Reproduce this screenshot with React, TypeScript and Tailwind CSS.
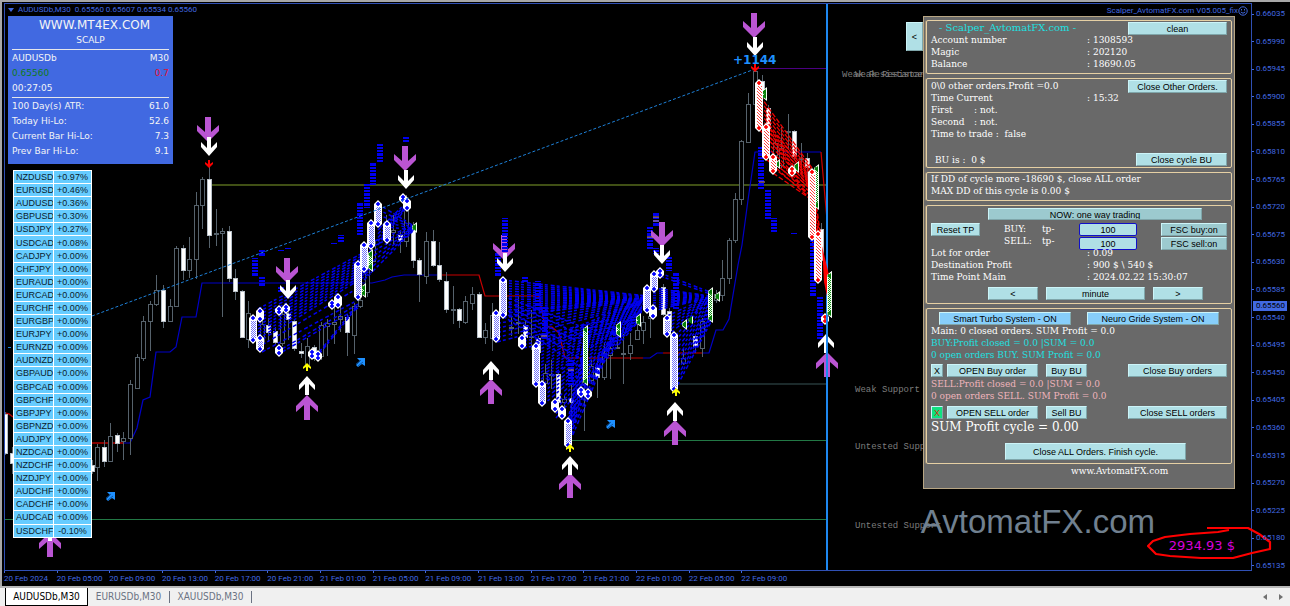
import { useState } from "react";

type Candle = [x: number, high: number, top: number, bottom: number, low: number, down?: 1];
type Span = [x: number, top: number, bottom: number];
type Fan = [x0: number, a0: number, b0: number, x1: number, a1: number, b1: number, count: number];

const candles: Candle[] = [
  [5, 412, 414, 453, 455, 1], [12, 447, 453, 463, 474, 1], [92, 460, 465, 471, 474, 1],
  [97, 444, 447, 467, 481], [104, 440, 447, 461, 467, 1], [110, 423, 436, 461, 461],
  [117, 433, 435, 443, 452, 1], [123, 432, 438, 441, 460], [130, 380, 384, 438, 455],
  [137, 354, 357, 388, 389], [143, 316, 321, 358, 361], [150, 301, 304, 321, 351],
  [156, 275, 290, 304, 306], [163, 285, 290, 321, 328, 1], [170, 299, 306, 321, 322],
  [176, 246, 248, 306, 306], [183, 245, 248, 270, 280, 1], [189, 237, 259, 270, 278],
  [196, 192, 205, 259, 279], [202, 177, 179, 205, 229], [209, 165, 179, 235, 248, 1],
  [216, 209, 233, 234, 246], [222, 228, 231, 233, 317], [229, 226, 231, 278, 282, 1],
  [235, 269, 278, 291, 300, 1], [242, 290, 291, 337, 338, 1], [248, 301, 313, 339, 348],
  [262, 312, 324, 343, 350], [268, 318, 325, 332, 342, 1], [275, 327, 331, 342, 345, 1],
  [282, 311, 314, 343, 346], [288, 306, 313, 319, 340, 1], [294, 320, 321, 348, 351, 1],
  [301, 343, 351, 353, 358, 1], [307, 338, 346, 366, 366], [314, 345, 347, 358, 361, 1],
  [321, 322, 325, 356, 360], [327, 319, 323, 326, 356], [334, 307, 322, 324, 344],
  [340, 300, 316, 319, 332], [347, 314, 317, 332, 356, 1], [354, 303, 306, 335, 354],
  [360, 296, 300, 306, 308], [367, 245, 262, 292, 297], [373, 236, 240, 261, 262],
  [386, 215, 222, 232, 245, 1], [393, 215, 230, 232, 245], [400, 230, 235, 241, 253, 1],
  [406, 195, 203, 241, 247], [413, 222, 230, 260, 268, 1], [419, 258, 260, 274, 302, 1],
  [426, 232, 241, 276, 284], [433, 230, 241, 265, 267, 1], [439, 242, 265, 279, 282, 1],
  [446, 272, 281, 309, 313, 1], [453, 286, 309, 310, 324], [459, 308, 309, 320, 328, 1],
  [465, 296, 301, 322, 324], [472, 287, 294, 303, 310], [479, 292, 294, 337, 338, 1],
  [485, 323, 330, 337, 344], [492, 303, 315, 338, 351], [511, 316, 327, 328, 336],
  [518, 296, 322, 323, 334], [525, 320, 325, 337, 345, 1], [531, 310, 336, 337, 350],
  [538, 336, 338, 352, 360, 1], [545, 364, 373, 383, 396], [551, 360, 374, 375, 389],
  [558, 372, 374, 402, 404, 1], [564, 395, 399, 402, 418], [571, 385, 398, 402, 425, 1],
  [584, 340, 360, 384, 431], [591, 360, 366, 380, 384], [597, 361, 367, 377, 398, 1],
  [604, 343, 353, 377, 380], [610, 340, 348, 355, 379], [617, 333, 347, 348, 349],
  [623, 334, 353, 354, 384], [630, 333, 345, 353, 360], [637, 320, 330, 339, 340],
  [643, 316, 322, 330, 344], [650, 298, 316, 318, 338], [663, 284, 287, 314, 316, 1],
  [669, 308, 311, 330, 333, 1], [683, 348, 358, 363, 365], [695, 334, 336, 346, 353, 1],
  [702, 318, 321, 348, 357], [716, 290, 294, 300, 303], [722, 260, 278, 295, 301],
  [729, 238, 240, 278, 284], [735, 193, 199, 240, 243], [741, 140, 141, 199, 205],
  [748, 93, 104, 142, 142], [755, 65, 71, 104, 104], [762, 75, 81, 96, 110, 1],
  [768, 105, 108, 128, 130, 1], [775, 140, 143, 155, 160], [781, 127, 148, 165, 168],
  [788, 114, 131, 132, 150], [794, 130, 131, 156, 160, 1], [801, 143, 158, 159, 175],
  [807, 153, 158, 167, 180, 1], [821, 223, 229, 260, 262, 1],
];

const bars: Span[] = [
  [255, 258, 277], [262, 250, 256], [262, 277, 286], [281, 249, 251], [288, 248, 249],
  [281, 286, 292], [341, 235, 243], [334, 243, 244], [360, 203, 235], [367, 184, 208],
  [373, 162, 185], [380, 144, 162], [406, 136, 142], [498, 253, 277], [505, 218, 252],
  [525, 277, 283], [538, 281, 310], [545, 306, 340], [571, 360, 385], [656, 213, 227],
  [650, 227, 249], [656, 248, 254], [663, 212, 213], [669, 256, 271], [676, 273, 310],
  [761, 146, 189], [768, 189, 219], [774, 218, 232], [794, 233, 234], [813, 239, 297],
  [820, 297, 340],
];

const blueStacks: Span[] = [
  [253, 316, 342], [260, 309, 321], [260, 336, 351], [279, 307, 314], [286, 305, 312],
  [279, 346, 355], [332, 301, 308], [338, 295, 307], [312, 350, 358], [318, 352, 360],
  [358, 262, 299], [364, 243, 271], [371, 221, 248], [378, 202, 226], [387, 222, 242],
  [403, 195, 202], [407, 199, 210], [503, 278, 317], [496, 311, 341], [522, 336, 348],
  [536, 344, 386], [542, 382, 405], [555, 400, 411], [562, 407, 418], [568, 419, 447],
  [581, 388, 396], [588, 390, 398], [647, 286, 312], [654, 272, 291], [653, 306, 318],
  [660, 269, 277], [667, 316, 336], [674, 333, 391],
];

const greenStacks: Span[] = [
  [414, 223, 232], [370, 250, 271], [363, 284, 297], [585, 326, 385], [618, 322, 337],
  [638, 314, 326], [653, 308, 316], [684, 320, 329], [690, 317, 323], [710, 288, 322],
  [717, 292, 301], [764, 88, 100], [777, 160, 168], [796, 162, 172], [816, 165, 209],
  [829, 272, 317],
];

const redStacks: Span[] = [
  [759, 81, 130], [766, 125, 159], [773, 155, 173], [792, 167, 175], [812, 170, 239],
  [818, 232, 282], [825, 315, 323],
];

const blueFans: Fan[] = [
  [258, 309, 342, 372, 248, 272, 11],
  [262, 345, 352, 358, 288, 300, 2],
  [282, 349, 352, 358, 304, 308, 2],
  [316, 356, 358, 358, 304, 306, 2],
  [364, 245, 280, 414, 226, 230, 7],
  [378, 204, 226, 414, 226, 230, 5],
  [378, 230, 245, 406, 203, 208, 5],
  [503, 280, 316, 647, 296, 300, 14],
  [497, 314, 342, 647, 297, 303, 7],
  [503, 296, 316, 585, 328, 370, 6],
  [523, 338, 348, 618, 318, 330, 4],
  [536, 344, 386, 642, 300, 312, 13],
  [543, 384, 405, 638, 312, 322, 6],
  [556, 400, 418, 638, 314, 322, 5],
  [568, 420, 446, 587, 330, 382, 8],
  [568, 420, 446, 616, 326, 334, 5],
  [647, 287, 312, 710, 296, 298, 10],
  [660, 273, 276, 710, 292, 294, 2],
  [667, 316, 336, 710, 296, 300, 6],
  [675, 336, 390, 712, 297, 320, 12],
];

const redFans: Fan[] = [
  [760, 96, 130, 812, 168, 190, 9],
  [766, 124, 159, 812, 176, 200, 9],
  [773, 157, 173, 812, 190, 200, 4],
  [812, 172, 239, 820, 232, 282, 8],
];

const purpleDown = [[208, 117], [287, 258], [405, 146], [504, 235], [662, 222], [754, 13]];
const whiteDown = [[209, 137], [288, 280], [406, 170], [505, 253], [662, 245], [755, 37]];
const purpleUp = [[307, 395], [491, 379], [570, 473], [675, 420], [827, 352], [50, 532]];
const whiteUp = [[307, 376], [491, 361], [570, 456], [675, 402], [826, 334], [50, 522]];

const BIG = "M-3 0H3V15L11 8V14L0 25L-11 14V8L-3 15Z";
const MID = "M-2 0H2V11L8 5V10L0 19L-8 10V5L-2 11Z";
const SMALL = "M-1 0H1V4L4 2V4L0 8L-4 4V2L-1 4Z";

const prices = [
  "0.66035", "0.65990", "0.65945", "0.65900", "0.65855", "0.65810", "0.65765", "0.65720",
  "0.65675", "0.65630", "0.65585", "0.65540", "0.65495", "0.65450", "0.65405", "0.65360",
  "0.65315", "0.65270", "0.65225", "0.65180", "0.65135",
];

const times = [
  "20 Feb 2024", "20 Feb 05:00", "20 Feb 09:00", "20 Feb 13:00", "20 Feb 17:00",
  "20 Feb 21:00", "21 Feb 01:00", "21 Feb 05:00", "21 Feb 09:00", "21 Feb 13:00",
  "21 Feb 17:00", "21 Feb 21:00", "22 Feb 01:00", "22 Feb 05:00", "22 Feb 09:00",
];

const changes: Record<string, string> = {
  NZDUSD: "+0.97%", EURUSD: "+0.46%", AUDUSD: "+0.36%", GBPUSD: "+0.30%",
  USDJPY: "+0.27%", USDCAD: "+0.08%", CADJPY: "+0.00%", CHFJPY: "+0.00%",
  EURAUD: "+0.00%", EURCAD: "+0.00%", EURCHF: "+0.00%", EURGBP: "+0.00%",
  EURJPY: "+0.00%", EURNZD: "+0.00%", AUDNZD: "+0.00%", GBPAUD: "+0.00%",
  GBPCAD: "+0.00%", GBPCHF: "+0.00%", GBPJPY: "+0.00%", GBPNZD: "+0.00%",
  AUDJPY: "+0.00%", NZDCAD: "+0.00%", NZDCHF: "+0.00%", NZDJPY: "+0.00%",
  AUDCHF: "+0.00%", CADCHF: "+0.00%", AUDCAD: "+0.00%", USDCHF: "-0.10%",
};

function fanPath([x0, a0, b0, x1, a1, b1, n]: Fan) {
  return Array.from({ length: n }, (_, i) => {
    const t = n > 1 ? i / (n - 1) : 0;
    return `M${x0} ${a0 + (b0 - a0) * t}L${x1} ${a1 + (b1 - a1) * t}`;
  }).join("");
}

// A column of order markers, with a diamond at each end.
function Stack({ span: [x, top, bottom], color, fill }: { span: Span; color: string; fill: string }) {
  const diamond = (y: number) => `M${x} ${y - 2}L${x + 2} ${y}L${x} ${y + 2}L${x - 2} ${y}Z`;
  return (
    <g>
      <path
        d={`M${x} ${top - 2}L${x + 4} ${top + 2}V${bottom - 2}L${x} ${bottom + 2}L${x - 4} ${bottom - 2}V${top + 2}Z`}
        fill="#fff"
      />
      {bottom - top > 14 && <rect x={x - 2} y={top + 5} width="5" height={bottom - top - 9} fill={fill} />}
      <path d={diamond(top + 2) + diamond(bottom - 2)} fill={color} stroke={color} strokeWidth="0.6" />
    </g>
  );
}

function ClosedStack({ span: [x, top, bottom] }: { span: Span }) {
  return (
    <g>
      <path d={`M${x + 3} ${top - 1}V${bottom + 1}L${x - 2} ${bottom - 3}V${top + 3}Z`} fill="#f4fff4" />
      <rect x={x - 1} y={top + 2} width="3" height={bottom - top - 4} fill="url(#greenDots)" />
      <path d={`M${x - 2} ${top + 4}l4 -3v6zM${x - 2} ${bottom - 4}l4 -3v6z`} fill="#078007" />
    </g>
  );
}

function Arrows({ at, shape, color, up }: { at: number[][]; shape: string; color: string; up?: boolean }) {
  const height = shape === BIG ? 25 : shape === MID ? 19 : 8;
  return (
    <>
      {at.map(([x, y]) => (
        <path
          key={`${x}-${y}`}
          d={shape}
          fill={color}
          transform={up ? `translate(${x} ${y + height}) scale(1 -1)` : `translate(${x} ${y})`}
        />
      ))}
    </>
  );
}

function Chart() {
  return (
    <svg
      className="absolute inset-0 size-full"
      viewBox="5 4 1246 566"
      preserveAspectRatio="xMinYMin slice"
      role="img"
      aria-label="AUDUSDb M30 chart"
    >
      <defs>
        <pattern id="levels" width="6" height="10" patternUnits="userSpaceOnUse">
          <path d="M0 0h6v2h-6zM0 3h6v3h-6zM0 7h6v2h-6z" fill="#0000f0" />
        </pattern>
        <pattern id="blueDots" width="2" height="2" patternUnits="userSpaceOnUse">
          <path d="M0 0h1v1h-1zM1 1h1v1h-1z" fill="#7474ff" />
        </pattern>
        <pattern id="redDots" width="3" height="3" patternUnits="userSpaceOnUse">
          <path d="M0 0h1v1h-1zM1 1h1v1h-1zM2 2h1v1h-1z" fill="#ff4040" />
        </pattern>
        <pattern id="greenDots" width="2" height="2" patternUnits="userSpaceOnUse">
          <path d="M0 0h1v1h-1zM1 1h1v1h-1z" fill="#189018" />
        </pattern>
      </defs>

      <path d="M209 185H827" stroke="#566b1c" strokeWidth="1.5" />
      <path d="M755 68.5H827" stroke="#4b0082" />
      <path d="M677 384H827" stroke="#26383a" strokeWidth="1.5" />
      <path d="M572 440.5H827M5 519.5H827" stroke="#227845" />

      <g fill="none">
        <path d="M5 413L9 414L13 417M92 443H124" stroke="#b00000" strokeWidth="1.5" />
        <path
          d="M124 443H130L137 428L143 400L150 397L156 352H170L176 347L182 317H196L202 283H372L385 280L392 277L404 275H440M643 358H650L657 353H663M703 353H709L716 330H723L729 319L738 265L742 245L748 200L755 152H821"
          stroke="#0000c8"
          strokeWidth="1.2"
        />
        <path
          d="M440 275H479L485 296H539L545 327H552L559 333L565 358H643M663 353H703M821 152L827 220"
          stroke="#c80000"
          strokeWidth="1.2"
        />
      </g>

      <g shapeRendering="crispEdges">
        {candles.map(([x, high, top, bottom, low, down]) => (
          <g key={x}>
            <path d={`M${x + 0.5} ${high}V${top}M${x + 0.5} ${bottom}V${low}`} stroke="#56626c" />
            <rect
              x={x - 1.5}
              y={top}
              width="4"
              height={Math.max(bottom - top, 1)}
              fill={down ? "#fff" : "#000"}
              stroke={down ? "#b8c0c8" : "#56626c"}
            />
          </g>
        ))}
      </g>

      <g fill="none" stroke="#0000f0" strokeWidth="1.5" strokeDasharray="4 2 3 3">
        {blueFans.map((fan, i) => <path key={i} d={fanPath(fan)} />)}
      </g>
      <g fill="none" stroke="#f00000" strokeWidth="1.3" strokeDasharray="5 2">
        {redFans.map((fan, i) => <path key={i} d={fanPath(fan)} />)}
      </g>

      {bars.map(([x, top, bottom]) => (
        <rect key={`${x}-${top}`} x={x - 3} y={top} width="6" height={bottom - top} fill="url(#levels)" />
      ))}

      {greenStacks.map((s, i) => <ClosedStack key={i} span={s} />)}
      {blueStacks.map((s, i) => <Stack key={i} span={s} color="#0000ff" fill="url(#blueDots)" />)}
      {redStacks.map((s, i) => <Stack key={i} span={s} color="#ff0000" fill="url(#redDots)" />)}

      <path d="M92 316L755 69M8 347.5h3" stroke="#1e80d8" strokeDasharray="3 2" />

      <Arrows at={purpleDown} shape={BIG} color="#ba55d3" />
      <rect x="502" y="229" width="6" height="23" fill="url(#levels)" />
      <Arrows at={whiteDown} shape={MID} color="#fff" />
      <Arrows at={purpleUp} shape={BIG} color="#ba55d3" up />
      <Arrows at={whiteUp} shape={MID} color="#fff" up />
      <Arrows at={[[209, 160], [755, 64]]} shape={SMALL} color="#f00" />
      <Arrows at={[[307, 363], [570, 444], [676, 388]]} shape={SMALL} color="#ff0" up />
      <path d="M653 217h6M653 221h6M647 237h6M759 182h6M541 336h6M568 370h6" stroke="#c89070" />

      {[[110, 496], [360, 362], [610, 424]].map(([x, y]) => (
        <g key={x} transform={`translate(${x} ${y})`}>
          <path d="M-3 -4H5V4L2 2L-2 5L-4 3L0 -1Z" fill="#1e90ff" />
          <path d="M-4 2L1 -2M-2 4L3 0" stroke="#0a4a90" strokeWidth="0.8" />
        </g>
      ))}

      <path d="M827 4V570" stroke="#1e88f0" strokeWidth="2" />
      <path d="M822 246L829 275V306L824 282Z" fill="#f00" />
      <ClosedStack span={[829, 272, 317]} />

      <g fontFamily="'Liberation Mono', monospace" fontSize="9" fill="#7c7c7c">
        <text x="842" y="77">Weak Resistance</text>
        <text x="855" y="77">Weak Resistance</text>
        <text x="855" y="392">Weak Support</text>
        <text x="855" y="449">Untested Support</text>
        <text x="855" y="528">Untested Support</text>
      </g>
      <text x="733" y="64" fontFamily="'DejaVu Sans', sans-serif" fontWeight="700" fontSize="12" fill="#1e90ff">
        +1144
      </text>
    </svg>
  );
}

function QuoteRow({ label, value, labelClass = "", valueClass = "" }: {
  label: string;
  value?: string;
  labelClass?: string;
  valueClass?: string;
}) {
  return (
    <div className="flex justify-between">
      <span className={labelClass}>{label}</span>
      <span className={valueClass}>{value}</span>
    </div>
  );
}

function InfoBox() {
  return (
    <section className="w-[165px] h-[148px] bg-[#4169e1] px-1 text-[9px] leading-[15px] text-gray-100 font-['DejaVu_Sans',sans-serif]">
      <h1 className="pl-2 pt-px text-center text-xs leading-4">WWW.MT4EX.COM</h1>
      <p className="text-center">SCALP</p>
      <div className="mt-px border-t border-gray-200 pt-px">
        <QuoteRow label="AUDUSDb" value="M30" />
        <QuoteRow label="0.65560" value="0.7" labelClass="text-[#107a20]" valueClass="text-[#e01030]" />
        <QuoteRow label="00:27:05" />
      </div>
      <div className="mt-px border-t border-gray-200 pt-px">
        <QuoteRow label="100 Day(s) ATR:" value="61.0" />
        <QuoteRow label="Today Hi-Lo:" value="52.6" />
        <QuoteRow label="Current Bar Hi-Lo:" value="7.3" />
        <QuoteRow label="Prev Bar Hi-Lo:" value="9.1" />
      </div>
    </section>
  );
}

function ChangeTable() {
  return (
    <table className="ml-[5px] mt-[6px] h-[368px] w-[79px] table-fixed border-collapse bg-[#66ccff] text-[9px] leading-3 text-[#0c1c2c] font-['Liberation_Sans',sans-serif]">
      <tbody>
        {Object.entries(changes).map(([pair, change]) => (
          <tr key={pair}>
            <td className="w-10 overflow-hidden border border-white p-0 pl-[2px]">{pair}</td>
            <td className="border border-white p-0 text-center">{change}</td>
          </tr>
        ))}
      </tbody>
    </table>
  );
}

function Btn({ children, className = "bg-[#b0e0e6]", size = "h-[13px]" }: {
  children: React.ReactNode;
  className?: string;
  size?: string;
}) {
  return (
    <button
      className={`${size} ${className} block shrink-0 overflow-hidden whitespace-nowrap border border-t-[#ccf4f8] border-l-[#ccf4f8] border-r-[#7fa6aa] border-b-[#7fa6aa] text-center text-[9px] leading-[12px] text-black font-['Liberation_Sans',sans-serif]`}
    >
      {children}
    </button>
  );
}

function Box({ children, className = "" }: { children: React.ReactNode; className?: string }) {
  return (
    <section className={`rounded-[2px] border border-[#e6d0a4] px-1 shadow-[-1px_0_0_#9c8c70] ${className}`}>
      {children}
    </section>
  );
}

function Field({ label, value }: { label: string; value: string }) {
  return (
    <div className="flex">
      <span className="w-39 shrink-0">{label}</span>
      <span>: {value}</span>
    </div>
  );
}

function TradePanel() {
  const [buyTp, setBuyTp] = useState("100");
  const [sellTp, setSellTp] = useState("100");
  const tpInput =
    "h-[13px] w-[58px] rounded-[2px] border border-[#1010c8] bg-[#b0e0e6] text-center text-[9px] leading-3 text-black font-['Liberation_Sans',sans-serif]";

  return (
    <aside className="absolute right-4 top-3 flex w-[312px] flex-col gap-1 border border-[#b8a684] bg-[#696969] px-[2px] pb-[11px] pt-[3px] text-[9px] leading-3 whitespace-pre text-white font-['DejaVu_Serif',serif]">
      <button className="absolute -left-[18px] top-[5px] h-[29px] w-[17px] border border-t-[#ccf4f8] border-l-[#ccf4f8] border-r-[#7fa6aa] border-b-[#7fa6aa] bg-[#b0e0e6] text-[9px] text-black font-['Liberation_Sans',sans-serif]">
        &lt;
      </button>

      <Box className="pb-[3px] pt-px">
        <div className="flex h-3 items-start justify-between">
          <h2 className="pl-2 text-[10px] text-[#20e0e0]">- Scalper_AvtomatFX.com -</h2>
          <Btn size="h-[13px] w-[99px]">clean</Btn>
        </div>
        <Field label="Account number" value="1308593" />
        <Field label="Magic" value="202120" />
        <Field label="Balance" value="18690.05" />
      </Box>

      <Box className="pb-px pt-px">
        <div className="flex h-3 items-start justify-between">
          <span>0\0 other orders.Profit =0.0</span>
          <Btn size="h-[13px] w-[99px]">Close Other Orders.</Btn>
        </div>
        <Field label="Time Current" value="15:32" />
        <div className="flex"><span className="w-[43px]">First</span>: not.</div>
        <div className="flex"><span className="w-[43px]">Second</span>: not.</div>
        <p>Time to trade :  false</p>
        <div className="mt-[13px] flex items-center justify-between">
          <span className="pl-1">BU is :  0 $</span>
          <Btn size="h-[13px] w-[91px]">Close cycle BU</Btn>
        </div>
      </Box>

      <Box className="pb-[3px]">
        <p>If DD of cycle more -18690 $, close ALL order</p>
        <p>MAX DD of this cycle is 0.00 $</p>
      </Box>

      <Box className="pb-[3px] pt-[2px]">
        <div className="flex pl-[57px]">
          <Btn size="h-3 w-[214px]" className="bg-[#9ccacf]">NOW: one way trading</Btn>
        </div>
        <div className="mt-[3px] flex h-6 items-start">
          <Btn size="h-[13px] w-[49px]">Reset TP</Btn>
          <div className="ml-6 w-[75px]">
            <label htmlFor="buy-tp" className="flex"><span className="w-[38px]">BUY:</span>tp-</label>
            <label htmlFor="sell-tp" className="flex"><span className="w-[38px]">SELL:</span>tp-</label>
          </div>
          <div className="flex flex-col gap-px">
            <input id="buy-tp" className={tpInput} value={buyTp} onChange={(e) => setBuyTp(e.target.value)} />
            <input id="sell-tp" className={tpInput} value={sellTp} onChange={(e) => setSellTp(e.target.value)} />
          </div>
          <div className="ml-auto flex flex-col gap-px">
            <Btn size="h-[13px] w-[66px]" className="bg-[#9ccacf]">FSC buy:on</Btn>
            <Btn size="h-[13px] w-[66px]" className="bg-[#9ccacf]">FSC sell:on</Btn>
          </div>
        </div>
        <Field label="Lot for order" value="0.09" />
        <Field label="Destination Profit" value="900 $ \ 540 $" />
        <Field label="Time Point Main" value="2024.02.22 15:30:07" />
        <div className="mt-1 flex gap-2 pl-[57px]">
          <Btn size="h-[13px] w-[50px]">&lt;</Btn>
          <Btn size="h-[13px] w-[99px]">minute</Btn>
          <Btn size="h-[13px] w-[50px]">&gt;</Btn>
        </div>
      </Box>

      <Box className="pb-[3px] pt-[3px]">
        <div className="flex gap-4 pl-2">
          <Btn size="h-[13px] w-[132px]" className="bg-[#87cefa]">Smart Turbo System - ON</Btn>
          <Btn size="h-[13px] w-[132px]" className="bg-[#87cefa]">Neuro Gride System - ON</Btn>
        </div>
        <p>Main: 0 closed orders. SUM Profit = 0.0</p>
        <p className="text-[#20e0e0]">BUY:Profit closed = 0.0 |SUM = 0.0</p>
        <p className="text-[#20e0e0]">0 open orders BUY. SUM Profit = 0.0</p>
        <div className="mt-[3px] flex">
          <Btn size="h-[13px] w-3">X</Btn>
          <Btn size="ml-1 h-[13px] w-[91px]">OPEN Buy order</Btn>
          <Btn size="ml-2 h-[13px] w-[41px]">Buy BU</Btn>
          <Btn size="ml-auto h-[13px] w-[99px]">Close Buy orders</Btn>
        </div>
        <p className="mt-px text-[#f0b4bc]">SELL:Profit closed = 0.0 |SUM = 0.0</p>
        <p className="text-[#f0b4bc]">0 open orders SELL. SUM Profit = 0.0</p>
        <div className="mt-1 flex">
          <Btn size="h-[13px] w-3" className="bg-[#10e080]"><span className="text-[#d03010]">X</span></Btn>
          <Btn size="ml-1 h-[13px] w-[91px]">OPEN SELL order</Btn>
          <Btn size="ml-2 h-[13px] w-[41px]">Sell BU</Btn>
          <Btn size="ml-auto h-[13px] w-[99px]">Close SELL orders</Btn>
        </div>
        <p className="text-xs leading-4">SUM Profit cycle = 0.00</p>
        <div className="mt-2 flex pl-[74px]">
          <button className="h-[17px] w-[181px] border border-t-[#ccf4f8] border-l-[#ccf4f8] border-r-[#7fa6aa] border-b-[#7fa6aa] bg-[#b0e0e6] text-[9px] text-black font-['Liberation_Sans',sans-serif]">
            Close ALL Orders. Finish cycle.
          </button>
        </div>
      </Box>
      <a href="#site" className="-mt-[3px] ml-[145px]">www.AvtomatFX.com</a>
    </aside>
  );
}

function TabBar() {
  const [active, setActive] = useState("AUDUSDb,M30");
  return (
    <nav className="flex h-5 items-stretch border-t-2 border-[#b8b8b8] bg-[#f0f0f0] pl-[5px] text-[10px] font-['DejaVu_Sans_Condensed','DejaVu_Sans',sans-serif]">
      {["AUDUSDb,M30", "EURUSDb,M30", "XAUUSDb,M30"].map((tab) => (
        <button
          key={tab}
          onClick={() => setActive(tab)}
          className={
            tab === active
              ? "w-[83px] border-x border-b border-black bg-white text-black"
              : "my-[3px] w-[82px] border-r border-gray-500 leading-3 text-gray-500"
          }
        >
          {tab}
        </button>
      ))}
      <div className="ml-auto flex items-center gap-3 pr-[7px]">
        <button aria-label="Scroll tabs left">
          <svg width="4" height="6" viewBox="0 0 4 6"><path d="M4 0V6L0 3Z" fill="#707070" /></svg>
        </button>
        <button aria-label="Scroll tabs right">
          <svg width="4" height="6" viewBox="0 0 4 6"><path d="M0 0V6L4 3Z" fill="#707070" /></svg>
        </button>
      </div>
    </nav>
  );
}

export default function App() {
  return (
    <div className="flex min-h-screen flex-col bg-black">
      <div className="flex flex-1 flex-col border-l-2 border-t-2 border-[#a8a8a8] pl-[2px] pt-px text-[8px] text-[#4169e1] font-['Roboto',sans-serif]">
        <div className="flex flex-1">
          <main className="relative min-h-[568px] flex-1 border border-[#3050b4]">
            <Chart />
            <div className="relative w-fit pl-[3px]">
              <p className="flex h-3 items-center gap-1">
                <svg width="6" height="4" viewBox="0 0 6 4"><path d="M0 0H6L3 4Z" fill="#4169e1" /></svg>
                <span className="whitespace-pre">AUDUSDb,M30  0.65560 0.65607 0.65534 0.65560</span>
              </p>
              <InfoBox />
              <ChangeTable />
            </div>
            <p className="absolute right-[3px] top-px flex items-center leading-3">
              Scalper_AvtomatFX.com V05.005_fix
              <svg width="10" height="10" viewBox="0 0 10 10" fill="none" stroke="#4169e1">
                <circle cx="5" cy="5" r="4.2" />
                <path d="M3.5 3v1.5M6.5 3v1.5M2.8 6Q5 8.5 7.2 6" />
              </svg>
            </p>
            <p className="absolute bottom-7 right-24 text-[33px] leading-10 text-[#708090] font-['Liberation_Sans',sans-serif]">
              AvtomatFX.com
            </p>
            <TradePanel />
            <p className="absolute bottom-4 right-4 text-[13px] leading-4 text-[#d800d8] font-['DejaVu_Sans',sans-serif]">
              2934.93 $
            </p>
            <svg className="absolute -right-[21px] bottom-[10px]" width="126" height="34" viewBox="1146 526 126 34" fill="none">
              <path
                d="M1207 528H1248L1259 534L1270 542V549L1252 553L1233 558H1201L1170 556L1156 554L1148 546L1153 541L1165 537L1190 534L1218 532L1229 530"
                stroke="#f00"
                strokeWidth="2.2"
                strokeLinejoin="round"
              />
            </svg>
          </main>
          <div className="relative flex w-[38px] flex-col justify-between pt-[6px]">
            {prices.map((price) => (
              <span key={price} className="flex items-center leading-[10px]">
                <i className="mr-[2px] h-px w-[2px] bg-[#4169e1]" />
                {price}
              </span>
            ))}
            <span className="absolute left-px top-[298px] w-[34px] bg-[#4169e1] pl-[3px] leading-[10px] text-black">
              0.65560
            </span>
          </div>
        </div>
        <div className="grid h-[15px] w-[790px] grid-cols-15">
          {times.map((time) => (
            <span key={time} className="whitespace-nowrap leading-3">
              <i className="block h-[2px] w-px bg-[#4169e1]" />
              {time}
            </span>
          ))}
        </div>
      </div>
      <TabBar />
    </div>
  );
}
